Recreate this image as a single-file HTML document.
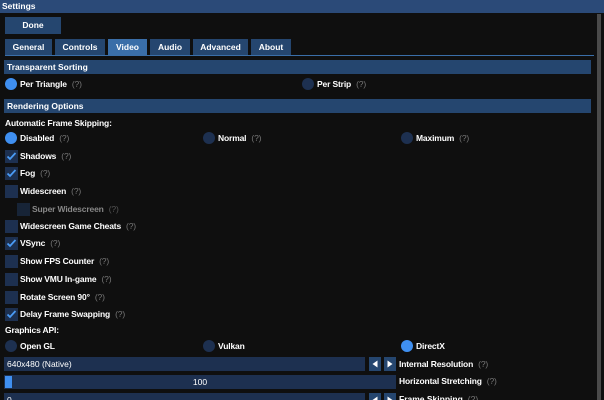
<!DOCTYPE html>
<html style="overflow:hidden;height:400px"><head><style>
*{margin:0;padding:0;box-sizing:border-box}
body{width:604px;height:400px;overflow:hidden;background:#0f0f0f;font-family:"Liberation Sans",sans-serif;font-size:8.5px;color:#fff;position:relative;font-weight:bold}
.a{position:absolute;white-space:nowrap}
.t{height:16px;line-height:17px;letter-spacing:-0.15px}
.q{color:#777;font-weight:normal;margin-left:5px}
.cb{position:absolute;width:13px;height:13px;background:#1d3050}
.rd{position:absolute;width:12px;height:12px;border-radius:50%;background:#1d3050}
.on{background:#3f8ff0}
.hdr{position:absolute;left:4px;width:587px;height:14px;background:#25466f;line-height:15px;padding-left:3px}
.tab{position:absolute;top:39px;height:16px;background:#25466f;line-height:17px;text-align:center}
.btn{position:absolute;width:12px;height:14px;background:#25466f}
</style></head><body>
<div class="a" style="left:0;top:0;width:604px;height:13px;background:#2b4a78;line-height:13px;padding-left:2px">Settings</div>
<div class="a" style="left:597px;top:14px;width:4px;height:386px;background:#4a4a4a"></div>
<div class="a" style="left:5px;top:17px;width:56px;height:17px;background:#25466f;line-height:17px;text-align:center">Done</div>
<div class="tab" style="left:5px;width:47px">General</div>
<div class="tab" style="left:55px;width:50px">Controls</div>
<div class="tab" style="left:108px;width:39px;background:#3a6ea8">Video</div>
<div class="tab" style="left:150px;width:40px">Audio</div>
<div class="tab" style="left:193px;width:55px">Advanced</div>
<div class="tab" style="left:251px;width:40px">About</div>
<div class="a" style="left:5px;top:55px;width:589px;height:1px;background:#3a6ea8"></div>
<div class="hdr" style="top:60px">Transparent Sorting</div>
<div class="rd on" style="left:5px;top:78px"></div><div class="a t" style="left:20px;top:76px">Per Triangle<span class="q">(?)</span></div>
<div class="rd" style="left:302px;top:78px"></div><div class="a t" style="left:317px;top:76px">Per Strip<span class="q">(?)</span></div>
<div class="hdr" style="top:99px">Rendering Options</div>
<div class="a t" style="left:5px;top:115px">Automatic Frame Skipping:</div>
<div class="rd on" style="left:5px;top:132px"></div><div class="a t" style="left:20px;top:130px">Disabled<span class="q">(?)</span></div>
<div class="rd" style="left:203px;top:132px"></div><div class="a t" style="left:218px;top:130px">Normal<span class="q">(?)</span></div>
<div class="rd" style="left:401px;top:132px"></div><div class="a t" style="left:416px;top:130px">Maximum<span class="q">(?)</span></div>
<div class="cb" style="left:5px;top:150px"><svg width="13" height="13"><path d="M2.5 6.5L5 9L10.5 3" stroke="#4a9bf5" stroke-width="1.8" fill="none"/></svg></div><div class="a t" style="left:20px;top:148px">Shadows<span class="q">(?)</span></div>
<div class="cb" style="left:5px;top:167px"><svg width="13" height="13"><path d="M2.5 6.5L5 9L10.5 3" stroke="#4a9bf5" stroke-width="1.8" fill="none"/></svg></div><div class="a t" style="left:20px;top:165px">Fog<span class="q">(?)</span></div>
<div class="cb" style="left:5px;top:185px"></div><div class="a t" style="left:20px;top:183px">Widescreen<span class="q">(?)</span></div>
<div class="cb" style="left:17px;top:203px;background:#172437"></div><div class="a t" style="left:32px;top:201px;color:#888">Super Widescreen<span class="q" style="color:#555">(?)</span></div>
<div class="cb" style="left:5px;top:220px"></div><div class="a t" style="left:20px;top:218px">Widescreen Game Cheats<span class="q">(?)</span></div>
<div class="cb" style="left:5px;top:237px"><svg width="13" height="13"><path d="M2.5 6.5L5 9L10.5 3" stroke="#4a9bf5" stroke-width="1.8" fill="none"/></svg></div><div class="a t" style="left:20px;top:235px">VSync<span class="q">(?)</span></div>
<div class="cb" style="left:5px;top:255px"></div><div class="a t" style="left:20px;top:253px">Show FPS Counter<span class="q">(?)</span></div>
<div class="cb" style="left:5px;top:273px"></div><div class="a t" style="left:20px;top:271px">Show VMU In-game<span class="q">(?)</span></div>
<div class="cb" style="left:5px;top:291px"></div><div class="a t" style="left:20px;top:289px">Rotate Screen 90°<span class="q">(?)</span></div>
<div class="cb" style="left:5px;top:308px"><svg width="13" height="13"><path d="M2.5 6.5L5 9L10.5 3" stroke="#4a9bf5" stroke-width="1.8" fill="none"/></svg></div><div class="a t" style="left:20px;top:306px">Delay Frame Swapping<span class="q">(?)</span></div>
<div class="a t" style="left:5px;top:322px">Graphics API:</div>
<div class="rd" style="left:5px;top:340px"></div><div class="a t" style="left:20px;top:338px">Open GL</div>
<div class="rd" style="left:203px;top:340px"></div><div class="a t" style="left:218px;top:338px">Vulkan</div>
<div class="rd on" style="left:401px;top:340px"></div><div class="a t" style="left:416px;top:338px">DirectX</div>
<div class="a" style="left:4px;top:357px;width:361px;height:14px;background:#1d3050;line-height:14px;padding-left:3px;font-weight:normal">640x480 (Native)</div>
<div class="btn" style="left:369px;top:357px"><svg width="12" height="14"><path d="M8.5 3.5L3.5 7L8.5 10.5Z" fill="#fff"/></svg></div>
<div class="btn" style="left:384px;top:357px"><svg width="12" height="14"><path d="M3.5 3.5L8.5 7L3.5 10.5Z" fill="#fff"/></svg></div>
<div class="a t" style="left:399px;top:356px">Internal Resolution<span class="q">(?)</span></div>
<div class="a" style="left:4px;top:375px;width:392px;height:14px;background:#1d3050;line-height:14px;text-align:center;font-weight:normal">100</div>
<div class="a" style="left:5px;top:376px;width:7px;height:12px;background:#3f8ff0"></div>
<div class="a t" style="left:399px;top:373px">Horizontal Stretching<span class="q">(?)</span></div>
<div class="a" style="left:4px;top:393px;width:361px;height:7px;background:#1d3050;line-height:14px;padding-left:3px;font-weight:normal;overflow:hidden">0</div>
<div class="btn" style="left:369px;top:393px;height:7px;overflow:hidden"><svg width="12" height="14"><path d="M8.5 3.5L3.5 7L8.5 10.5Z" fill="#fff"/></svg></div>
<div class="btn" style="left:384px;top:393px;height:7px;overflow:hidden"><svg width="12" height="14"><path d="M3.5 3.5L8.5 7L3.5 10.5Z" fill="#fff"/></svg></div>
<div class="a" style="left:399px;top:391px;height:9px;line-height:17px;overflow:hidden">Frame Skipping<span class="q">(?)</span></div>
</body></html>
